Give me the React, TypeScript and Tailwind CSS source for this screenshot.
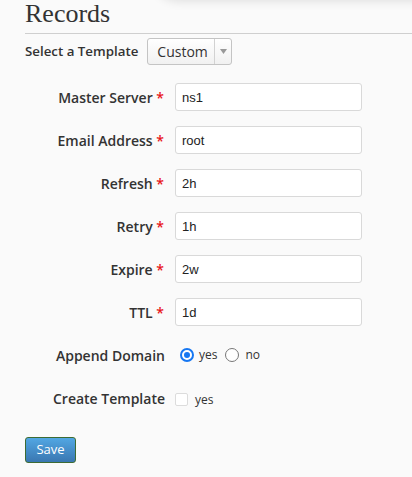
import React from 'react'

const fields = [
  { label: 'Master Server', value: 'ns1' },
  { label: 'Email Address', value: 'root' },
  { label: 'Refresh', value: '2h' },
  { label: 'Retry', value: '1h' },
  { label: 'Expire', value: '2w' },
  { label: 'TTL', value: '1d' },
]

export default function App() {
  return (
    <div className="relative min-h-screen overflow-hidden bg-[#fafafa] pl-[25px] text-[#333] font-['Open_Sans',sans-serif]">
      {/* faint shadow of a panel sitting above the page */}
      <div className="absolute left-[150px] right-[-20px] top-[-30px] h-[30px] rounded-bl-[30px] shadow-[0_2px_10px_rgba(0,0,0,0.10)]" />

      <h1 className="h-[34px] border-b border-[#cfcfcf] text-[26px] leading-[28px] text-[#333] font-['Liberation_Serif',serif]">
        Records
      </h1>

      <div className="mt-[4px] flex h-[27px] items-center">
        <span className="text-[13.3px] font-semibold">Select a Template</span>
        <div className="ml-[9px] flex h-[27px] w-[85px] items-stretch rounded-[3px] border border-[#c4c4c4] bg-gradient-to-b from-white to-[#f1f1f1]">
          <span className="flex w-[66px] items-center pl-[9px] text-[14px]">Custom</span>
          <span className="flex flex-1 items-center justify-center border-l border-[#d2d2d2]">
            <svg width="7" height="5" viewBox="0 0 7 5">
              <path d="M0 0 L7 0 L3.5 5 Z" fill="#999" />
            </svg>
          </span>
        </div>
      </div>

      <form className="mt-[18px] flex flex-col gap-[15px]">
        {fields.map((f) => (
          <div key={f.label} className="flex h-[28px] items-center">
            <label className="w-[140px] pr-[1px] text-right text-[14px] font-semibold">
              {f.label} <span className="text-[#e8141b]">*</span>
            </label>
            <input
              className="ml-[10px] h-[28px] w-[187px] rounded-[3px] border border-[#d9d9d9] bg-white px-[6px] text-[13px] text-[#222] outline-none font-['Liberation_Sans',sans-serif]"
              defaultValue={f.value}
            />
          </div>
        ))}

        <div className="flex h-[28px] items-center">
          <span className="w-[140px] text-right text-[14px] font-semibold">Append Domain</span>
          <div className="ml-[15px] flex items-center text-[12px]">
            <span className="flex h-[14px] w-[14px] items-center justify-center rounded-full border-2 border-[#1677f2] bg-white">
              <span className="h-[6px] w-[6px] rounded-full bg-[#1677f2]" />
            </span>
            <span className="ml-[5px]">yes</span>
            <span className="ml-[8px] h-[14px] w-[14px] rounded-full border border-[#777] bg-white" />
            <span className="ml-[6px]">no</span>
          </div>
        </div>

        <div className="flex h-[28px] items-center">
          <span className="w-[140px] text-right text-[14px] font-semibold">Create Template</span>
          <div className="ml-[10px] mt-[3px] flex items-center text-[12px]">
            <span className="h-[13px] w-[13px] rounded-[2px] border border-[#dcdcdc] bg-white" />
            <span className="ml-[7px]">yes</span>
          </div>
        </div>

        <div className="mt-[9px]">
          <button
            type="button"
            className="h-[26px] w-[51px] rounded-[3px] border border-[#3d6b33] bg-gradient-to-b from-[#52a7e3] to-[#3a77b1] text-[13px] text-white"
          >
            Save
          </button>
        </div>
      </form>
    </div>
  )
}
